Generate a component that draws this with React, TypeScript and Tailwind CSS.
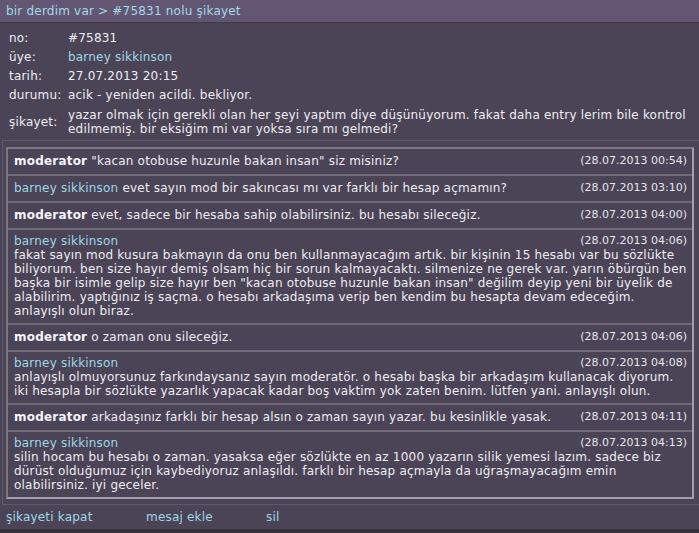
import React from "react";

type Msg = {
  mod: boolean;
  date: string;
  lines: string[];
};

const messages: Msg[] = [
  { mod: true, date: "(28.07.2013 00:54)", lines: ["\"kacan otobuse huzunle bakan insan\" siz misiniz?"] },
  { mod: false, date: "(28.07.2013 03:10)", lines: ["evet sayın mod bir sakıncası mı var farklı bir hesap açmamın?"] },
  { mod: true, date: "(28.07.2013 04:00)", lines: ["evet, sadece bir hesaba sahip olabilirsiniz. bu hesabı sileceğiz."] },
  {
    mod: false,
    date: "(28.07.2013 04:06)",
    lines: [
      "fakat sayın mod kusura bakmayın da onu ben kullanmayacağım artık. bir kişinin 15 hesabı var bu sözlükte",
      "biliyorum. ben size hayır demiş olsam hiç bir sorun kalmayacaktı. silmenize ne gerek var. yarın öbürgün ben",
      "başka bir isimle gelip size hayır ben \"kacan otobuse huzunle bakan insan\" değilim deyip yeni bir üyelik de",
      "alabilirim. yaptığınız iş saçma. o hesabı arkadaşıma verip ben kendim bu hesapta devam edeceğim.",
      "anlayışlı olun biraz.",
    ],
  },
  { mod: true, date: "(28.07.2013 04:06)", lines: ["o zaman onu sileceğiz."] },
  {
    mod: false,
    date: "(28.07.2013 04:08)",
    lines: [
      "anlayışlı olmuyorsunuz farkındaysanız sayın moderatör. o hesabı başka bir arkadaşım kullanacak diyorum.",
      "iki hesapla bir sözlükte yazarlık yapacak kadar boş vaktim yok zaten benim. lütfen yani. anlayışlı olun.",
    ],
  },
  { mod: true, date: "(28.07.2013 04:11)", lines: ["arkadaşınız farklı bir hesap alsın o zaman sayın yazar. bu kesinlikle yasak."] },
  {
    mod: false,
    date: "(28.07.2013 04:13)",
    lines: [
      "silin hocam bu hesabı o zaman. yasaksa eğer sözlükte en az 1000 yazarın silik yemesi lazım. sadece biz",
      "dürüst olduğumuz için kaybediyoruz anlaşıldı. farklı bir hesap açmayla da uğraşmayacağım emin",
      "olabilirsiniz. iyi geceler.",
    ],
  },
];

const info = [
  { label: "no:", value: "#75831", link: false },
  { label: "üye:", value: "barney sikkinson", link: true },
  { label: "tarih:", value: "27.07.2013 20:15", link: false },
  { label: "durumu:", value: "acik - yeniden acildi. bekliyor.", link: false },
];

function Message({ m }: { m: Msg }) {
  const date = (
    <span className="shrink-0 text-[11px] tracking-normal text-[#e6e4ec]">{m.date}</span>
  );
  if (m.mod || m.lines.length === 1) {
    return (
      <div className="flex items-center justify-between border-b-2 border-[#6f6a76] pl-[6px] pr-[5px] pt-[5px] pb-[6px] leading-[14px] whitespace-nowrap last:border-b-0">
        <div>
          {m.mod ? (
            <span className="font-bold text-[#f6f4fa]">moderator</span>
          ) : (
            <span className="text-[#9fd6e6]">barney sikkinson</span>
          )}{" "}
          {m.lines[0]}
        </div>
        {date}
      </div>
    );
  }
  return (
    <div className="border-b-2 border-[#6f6a76] pl-[6px] pr-[5px] pt-[4px] pb-[5px] leading-[14px] whitespace-nowrap last:border-b-0">
      <div className="flex items-center justify-between">
        <span className="text-[#9fd6e6]">barney sikkinson</span>
        {date}
      </div>
      {m.lines.map((l, i) => (
        <div key={i}>{l}</div>
      ))}
    </div>
  );
}

export default function App() {
  return (
    <div className="flex h-[533px] w-[699px] flex-col overflow-hidden bg-[#4b4456] font-['DejaVu_Sans',sans-serif] text-[12px] tracking-[0.2px] text-[#eeecf2]">
      {/* başlık */}
      <div className="h-[23px] shrink-0 border-b border-[#3e3848] bg-[#625672] px-[6px] leading-[22px] text-[#a4d8e8]">
        bir derdim var &gt; #75831 nolu şikayet
      </div>

      {/* bilgiler */}
      <div className="px-[9px] pt-[5px]">
        {info.map((r) => (
          <div key={r.label} className="flex h-[19px] items-center">
            <span className="w-[59px] shrink-0">{r.label}</span>
            <span className={r.link ? "text-[#9fd6e6]" : ""}>{r.value}</span>
          </div>
        ))}
        <div className="flex items-center pt-[4px] pb-[4px] leading-[14px] whitespace-nowrap">
          <span className="w-[59px] shrink-0">şikayet:</span>
          <div>
            <div>yazar olmak için gerekli olan her şeyi yaptım diye düşünüyorum. fakat daha entry lerim bile kontrol</div>
            <div>edilmemiş. bir eksiğim mi var yoksa sıra mı gelmedi?</div>
          </div>
        </div>
      </div>

      {/* mesajlar */}
      <div className="ml-[2px] border-t border-l border-b border-[#5f596a] pl-[3px] pr-[5px] pt-[6px] pb-[5px]">
        <div className="border-2 border-t-[#7c7782] border-l-[#7c7782] border-r-[#a29eaa] border-b-[#a29eaa]">
          {messages.map((m, i) => (
            <Message key={i} m={m} />
          ))}
        </div>
      </div>

      {/* alt */}
      <div className="flex h-[24px] shrink-0 items-center px-[6px] text-[#9fd6e6]">
        <span className="w-[140px]">şikayeti kapat</span>
        <span className="w-[120px]">mesaj ekle</span>
        <span>sil</span>
      </div>
      <div className="flex-1 bg-[#36323c]" />
    </div>
  );
}
